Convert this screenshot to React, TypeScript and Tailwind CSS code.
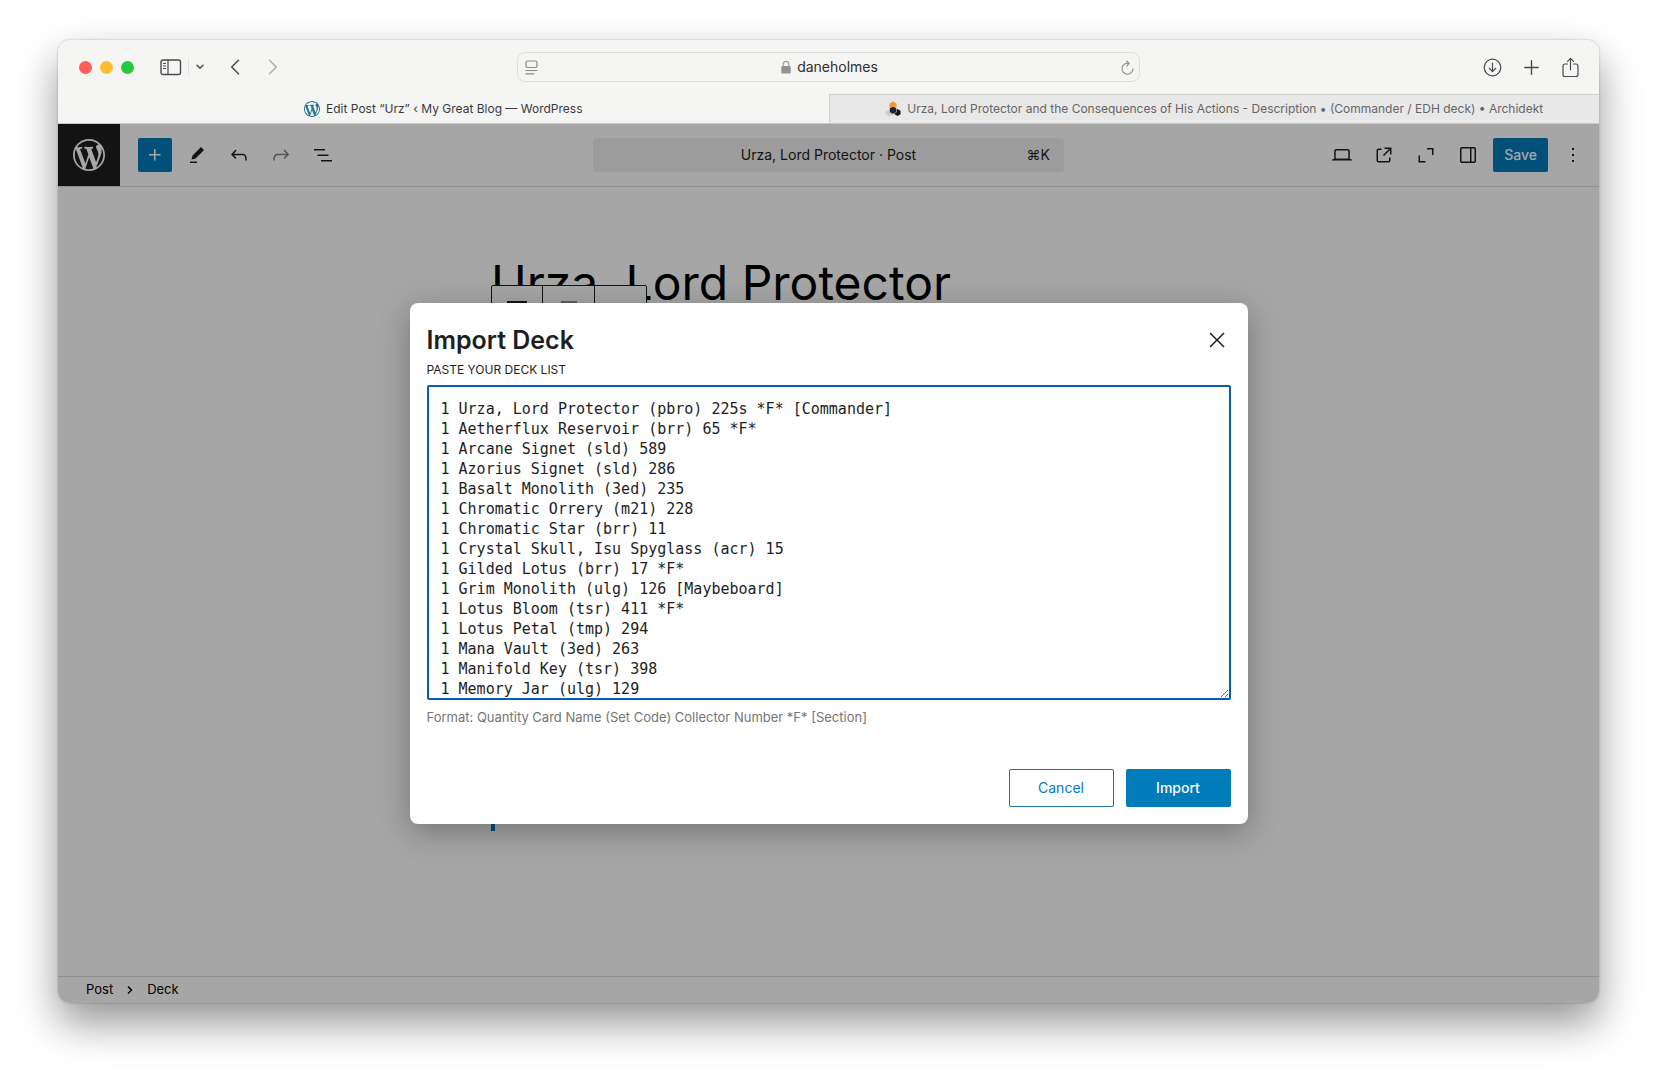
import type { ReactNode } from "react";

const deckList = `1 Urza, Lord Protector (pbro) 225s *F* [Commander]
1 Aetherflux Reservoir (brr) 65 *F*
1 Arcane Signet (sld) 589
1 Azorius Signet (sld) 286
1 Basalt Monolith (3ed) 235
1 Chromatic Orrery (m21) 228
1 Chromatic Star (brr) 11
1 Crystal Skull, Isu Spyglass (acr) 15
1 Gilded Lotus (brr) 17 *F*
1 Grim Monolith (ulg) 126 [Maybeboard]
1 Lotus Bloom (tsr) 411 *F*
1 Lotus Petal (tmp) 294
1 Mana Vault (3ed) 263
1 Manifold Key (tsr) 398
1 Memory Jar (ulg) 129`;

const icons = {
  plus: "M11 12.5V17.5H12.5V12.5H17.5V11H12.5V6H11V11H6V12.5H11Z",
  edit: "m19 7-3-3-8.5 8.5-1 4 4-1L19 7Zm-7 11.5H5V20h7v-1.5Z",
  undo: "M18.3 11.7c-.6-.6-1.4-.9-2.3-.9H6.7l2.9-3.3-1.1-1-4.5 5L8.5 16l1-1-2.7-2.7H16c.5 0 .9.2 1.3.5 1 1 1 3.4 1 4.5v.3h1.5v-.2c0-1.5 0-4.3-1.5-5.7z",
  redo: "M15.6 6.5l-1.1 1 2.9 3.3H8c-.9 0-1.7.3-2.3.9-1.4 1.5-1.4 4.2-1.4 5.6v.2h1.5v-.3c0-1.1 0-3.5 1-4.5.3-.3.7-.5 1.3-.5h9.2L14.5 15l1.1 1.1 4.6-4.6-4.6-5z",
  list: "M3 6h11v1.5H3V6Zm3.5 5.5h11V13h-11v-1.5ZM21 17H10v1.5h11V17Z",
  desktop:
    "M20.5 16h-.7V8c0-1.1-.9-2-2-2H6.2c-1.1 0-2 .9-2 2v8h-.7c-.8 0-1.5.7-1.5 1.5h20c0-.8-.7-1.5-1.5-1.5zM5.7 8c0-.3.2-.5.5-.5h11.6c.3 0 .5.2.5.5v7.6H5.7V8z",
  external:
    "M19.5 4.5h-7V6h4.44l-5.97 5.97 1.06 1.06L18 7.06v4.44h1.5v-7Zm-13 1a2 2 0 0 0-2 2v10a2 2 0 0 0 2 2h10a2 2 0 0 0 2-2v-3H17v3a.5.5 0 0 1-.5.5h-10a.5.5 0 0 1-.5-.5v-10a.5.5 0 0 1 .5-.5h3V5.5h-3Z",
  expand: "M13 5h6.5v7H18V6.5h-5V5ZM4.5 12.5H6V18h5.5v1.5h-7v-7Z",
  drawer:
    "M18 4H6c-1.1 0-2 .9-2 2v12c0 1.1.9 2 2 2h12c1.1 0 2-.9 2-2V6c0-1.1-.9-2-2-2zm-4 14.5H6c-.3 0-.5-.2-.5-.5V6c0-.3.2-.5.5-.5h8v13zm4.5-.5c0 .3-.2.5-.5.5h-2.5v-13H18c.3 0 .5.2.5.5v12z",
  more: "M13 19h-2v-2h2v2zm0-6h-2v-2h2v2zm0-6h-2V5h2v2z",
  close:
    "m13.06 12 6.47-6.47-1.06-1.06L12 10.94 5.53 4.47 4.47 5.53 10.94 12l-6.47 6.47 1.06 1.06L12 13.06l6.47 6.47 1.06-1.06L13.06 12Z",
};

function Icon({ name, className = "size-6" }: { name: keyof typeof icons; className?: string }) {
  return (
    <svg viewBox="0 0 24 24" fill="currentColor" className={className} aria-hidden="true">
      <path d={icons[name]} />
    </svg>
  );
}

function WordPressLogo({ className }: { className: string }) {
  return (
    <svg viewBox="0 0 20 20" fill="currentColor" className={className} aria-hidden="true">
      <path d="M20 10c0-5.51-4.49-10-10-10C4.48 0 0 4.49 0 10c0 5.52 4.48 10 10 10 5.51 0 10-4.48 10-10zM7.78 15.37L4.37 6.22c.55-.02 1.17-.08 1.17-.08.5-.06.44-1.13-.06-1.11 0 0-1.45.11-2.37.11-.18 0-.37 0-.58-.01C4.12 2.69 6.87 1.11 10 1.11c2.33 0 4.45.87 6.05 2.34-.68-.11-1.65.39-1.65 1.58 0 .74.45 1.36.9 2.1.35.61.55 1.36.55 2.46 0 1.49-1.4 5-1.4 5l-3.03-8.37c.54-.02.82-.17.82-.17.5-.05.44-1.25-.06-1.22 0 0-1.44.12-2.38.12-.87 0-2.33-.12-2.33-.12-.5-.03-.56 1.2-.06 1.22l.92.08 1.26 3.41zM17.41 10c.24-.64.74-1.87.43-4.25.7 1.29 1.05 2.71 1.05 4.25 0 3.29-1.73 6.24-4.4 7.78.97-2.59 1.94-5.2 2.92-7.78zM6.1 18.09C3.12 16.65 1.11 13.53 1.11 10c0-1.3.23-2.48.72-3.59C3.25 10.3 4.67 14.2 6.1 18.09zm4.03-6.63l2.58 6.98c-.86.29-1.76.45-2.71.45-.79 0-1.57-.11-2.29-.33.81-2.38 1.62-4.74 2.42-7.1z" />
    </svg>
  );
}

function Line({ box, className, children }: { box: string; className: string; children: ReactNode }) {
  return (
    <svg
      viewBox={box}
      fill="none"
      stroke="currentColor"
      strokeLinecap="round"
      strokeLinejoin="round"
      className={className}
      aria-hidden="true"
    >
      {children}
    </svg>
  );
}

function ToolButton({ label, children, className = "" }: { label: string; children: ReactNode; className?: string }) {
  return (
    <button type="button" aria-label={label} className={`flex size-[34px] items-center justify-center ${className}`}>
      {children}
    </button>
  );
}

function BrowserToolbar() {
  return (
    <div className="grid h-[54px] grid-cols-[1fr_minmax(0,623px)_1fr] items-center bg-[#f5f5f4] text-[#4a4a4a]">
      <div className="flex items-center pl-[21px]">
        <div className="flex gap-2">
          <span className="size-[13px] rounded-full bg-[#ff5f57]" />
          <span className="size-[13px] rounded-full bg-[#febc2e]" />
          <span className="size-[13px] rounded-full bg-[#28c840]" />
        </div>
        <button type="button" aria-label="Toggle sidebar" className="ml-[26px]">
          <Line box="0 0 22 17" className="h-[17px] w-[22px]">
            <rect x="1" y="1" width="19.5" height="14.5" rx="2" strokeWidth="1.4" />
            <path d="M8 1v14.5" strokeWidth="1.2" />
            <path d="M3.5 4.5h2.2M3.5 7h2.2M3.5 9.5h2.2" strokeWidth="1" />
          </Line>
        </button>
        <span className="ml-1.5 h-[18px] w-px bg-[#e3e3e3]" />
        <button type="button" aria-label="Tab groups" className="ml-[7px]">
          <Line box="0 0 8 6" className="h-1.5 w-2">
            <path d="M1 1.3l3 3 3-3" strokeWidth="1.4" />
          </Line>
        </button>
        <button type="button" aria-label="Back" className="ml-[26px]">
          <Line box="0 0 10 16" className="h-4 w-2.5">
            <path d="M8.5 1.2L1.7 8l6.8 6.8" strokeWidth="1.5" />
          </Line>
        </button>
        <button type="button" aria-label="Forward" className="ml-7 text-[#b0b0af]">
          <Line box="0 0 10 16" className="h-4 w-2.5">
            <path d="M1.5 1.2L8.3 8l-6.8 6.8" strokeWidth="1.5" />
          </Line>
        </button>
      </div>

      <div className="flex h-[30px] items-center rounded-lg border border-[#dededd] pr-[5px] pl-[7px] text-[#8a8a8a]">
        <button type="button" aria-label="Page menu">
          <Line box="0 0 13 15" className="h-[15px] w-[13px]">
            <rect x="1" y="1" width="11" height="6.5" rx="1.5" strokeWidth="1.2" />
            <path d="M1 10.5h11M1 13.8h8" strokeWidth="1.2" />
          </Line>
        </button>
        <div className="flex flex-1 items-center justify-center gap-1.5">
          <svg viewBox="0 0 10 14" className="h-3.5 w-2.5" aria-hidden="true">
            <path d="M2.3 7V4a2.7 2.7 0 0 1 5.4 0v3" fill="none" stroke="#a2a2a2" strokeWidth="1.2" />
            <rect x=".3" y="6" width="9.4" height="7.5" rx="1.3" fill="#929292" />
          </svg>
          <span className="text-sm text-[#2f2f2f]">daneholmes</span>
        </div>
        <button type="button" aria-label="Reload">
          <Line box="0 0 13 15" className="h-[15px] w-[13px]">
            <path d="M12 8.7A5.5 5.5 0 1 1 7.6 3.3M5.6 1l2.5 2.3L5.9 5.8" strokeWidth="1.1" />
          </Line>
        </button>
      </div>

      <div className="flex items-center justify-end gap-5 pr-[19px]">
        <button type="button" aria-label="Downloads">
          <Line box="0 0 19 19" className="size-[19px]">
            <circle cx="9.5" cy="9.5" r="8.3" strokeWidth="1.2" />
            <path d="M9.5 5v8.3M6.2 10.2l3.3 3.3 3.3-3.3" strokeWidth="1.2" />
          </Line>
        </button>
        <button type="button" aria-label="New tab">
          <Line box="0 0 19 19" className="size-[19px]">
            <path d="M9.5 2.8v13.4M2.8 9.5h13.4" strokeWidth="1.4" />
          </Line>
        </button>
        <button type="button" aria-label="Share">
          <Line box="0 0 19 21" className="h-[21px] w-[19px]">
            <path
              d="M6.5 7H4a2 2 0 0 0-2 2v8.500a2 2 0 0 0 2 2h11a2 2 0 0 0 2-2V9a2 2 0 0 0-2-2h-2.500M9.500 13V1.500M6.500 4.300l3-3 3 3"
              strokeWidth="1.2"
            />
          </Line>
        </button>
      </div>
    </div>
  );
}

function BrowserTabs() {
  return (
    <div className="grid h-[30px] grid-cols-2 border-b border-[#c8c8c8] text-xs" role="tablist">
      <button
        type="button"
        role="tab"
        aria-selected="true"
        className="flex min-w-0 items-center justify-center gap-1.5 bg-[#f5f5f4] pt-px text-[#3a3a3a]"
      >
        <WordPressLogo className="size-4 shrink-0 text-[#21759b]" />
        <span className="truncate">Edit Post “Urz” ‹ My Great Blog — WordPress</span>
      </button>
      <button
        type="button"
        role="tab"
        aria-selected="false"
        className="flex min-w-0 items-center justify-center gap-1.5 border-t border-l border-[#d0d0d0] bg-[#e8e8e8] text-[#666666]"
      >
        <svg viewBox="0 0 16 16" className="size-4 shrink-0" aria-hidden="true">
          <path d="M4.500 2.500L8 .5l3.500 2v4l-3.500 2-3.500-2z" fill="#f59a1c" />
          <path d="M.5 10.500l3-1.800 3.500 2v3l-3 1.800-3.500-2z" fill="#cfcfcf" />
          <path d="M9.500 9.500l3-1.500 3 1.700v3.600l-3 1.700-3-1.700z" fill="#111111" />
          <path d="M4.500 7.200L8 5.200l3.500 2v4L8 13.200l-3.500-2z" fill="#262626" stroke="#e8e8e8" strokeWidth=".5" />
        </svg>
        <span className="truncate">
          Urza, Lord Protector and the Consequences of His Actions - Description • (Commander / EDH deck) • Archidekt
        </span>
      </button>
    </div>
  );
}

function EditorHeader() {
  return (
    <header className="grid h-[63px] shrink-0 grid-cols-[1fr_minmax(0,471px)_1fr] items-center border-b border-[#dddddd] bg-white text-[#1e1e1e]">
      <div className="flex items-center gap-2">
        <a
          href="#"
          aria-label="View posts"
          className="mr-2.5 flex size-[62px] items-center justify-center bg-[#1e1e1e] text-white"
        >
          <WordPressLogo className="size-8" />
        </a>
        <ToolButton label="Add block" className="rounded-xs bg-[#007cba] text-white">
          <Icon name="plus" />
        </ToolButton>
        <ToolButton label="Tools">
          <Icon name="edit" />
        </ToolButton>
        <ToolButton label="Undo">
          <Icon name="undo" />
        </ToolButton>
        <ToolButton label="Redo" className="text-[#808080]">
          <Icon name="redo" />
        </ToolButton>
        <ToolButton label="Document overview">
          <Icon name="list" />
        </ToolButton>
      </div>

      <button type="button" className="grid h-[34px] grid-cols-[1fr_auto_1fr] items-center rounded bg-[#f0f0f0] px-3.5 text-sm">
        <span />
        <span>Urza, Lord Protector · Post</span>
        <span className="text-right">⌘K</span>
      </button>

      <div className="flex items-center justify-end gap-2 pr-[9px]">
        <ToolButton label="View">
          <Icon name="desktop" />
        </ToolButton>
        <ToolButton label="View post">
          <Icon name="external" />
        </ToolButton>
        <ToolButton label="Expand">
          <Icon name="expand" />
        </ToolButton>
        <ToolButton label="Settings">
          <Icon name="drawer" />
        </ToolButton>
        <button type="button" className="h-[34px] rounded-xs bg-[#007cba] px-[11px] text-sm font-medium text-white">
          Save
        </button>
        <ToolButton label="Options">
          <Icon name="more" />
        </ToolButton>
      </div>
    </header>
  );
}

function EditorCanvas() {
  return (
    <main className="min-h-0 flex-1 overflow-hidden bg-white pt-16 text-black">
      <div className="relative mx-auto max-w-[675px]">
        <h1 className="text-[48px] leading-[64px] font-normal">Urza, Lord Protector</h1>
        <div className="absolute top-[34px] left-0 flex h-12 rounded-xs border border-[#1e1e1e] bg-white">
          <div className="flex w-[51px] justify-center border-r border-[#1e1e1e] pt-[15px]">
            <span className="h-4 w-5 border-t-4 border-[#1e1e1e]" />
          </div>
          <div className="flex w-[52px] justify-center border-r border-[#1e1e1e] pt-[15px]">
            <span className="h-4 w-4 border-t-4 border-[#949494]" />
          </div>
          <div className="w-[51px]" />
        </div>
        <div className="mt-12 h-[468px] w-1 bg-[#007cba]" />
      </div>
    </main>
  );
}

function Breadcrumb() {
  return (
    <nav
      aria-label="Block breadcrumb"
      className="flex h-[27px] shrink-0 items-center border-t border-[#dddddd] bg-white pl-7 text-[13px] text-black"
    >
      <a href="#">Post</a>
      <svg viewBox="0 0 6 8" className="mx-3.5 h-2 w-1.5" fill="none" stroke="currentColor" strokeWidth="1.5" aria-hidden="true">
        <path d="M1 .5L4.5 4 1 7.5" />
      </svg>
      <span>Deck</span>
    </nav>
  );
}

function ImportDialog() {
  return (
    <div className="absolute inset-0 flex items-center justify-center bg-black/35">
      <section
        role="dialog"
        aria-modal="true"
        aria-labelledby="import-title"
        className="w-full max-w-[838px] rounded-lg bg-white px-[17px] pb-[17px] shadow-[0_8px_32px_rgba(0,0,0,0.3)]"
      >
        <div className="flex h-[59px] items-end justify-between">
          <h2 id="import-title" className="text-[25px] leading-11 font-semibold text-[#1e1e1e]">
            Import Deck
          </h2>
          <button type="button" aria-label="Close" className="mb-2 flex size-7 items-center justify-center text-[#1e1e1e]">
            <Icon name="close" />
          </button>
        </div>
        <label htmlFor="deck-list" className="block text-xs leading-4 text-[#1e1e1e] uppercase">
          Paste your deck list
        </label>
        <textarea
          id="deck-list"
          defaultValue={deckList}
          spellCheck={false}
          className="mt-[7px] block h-[315px] w-full resize overflow-hidden rounded-xs border-2 border-[#0a5cb0] px-3 pt-3 font-['DejaVu_Sans_Mono',monospace] text-[15px] leading-5 text-[#1e1e1e] outline-none"
        />
        <p className="mt-[7px] text-[13px] leading-5 text-[#757575]">
          Format: Quantity Card Name (Set Code) Collector Number *F* [Section]
        </p>
        <div className="mt-[42px] flex justify-end gap-3 text-sm">
          <button type="button" className="h-[38px] w-[105px] rounded-xs border border-[#2271b1] text-[#007cba]">
            Cancel
          </button>
          <button type="button" className="h-[38px] w-[105px] rounded-xs bg-[#007cba] font-medium text-white">
            Import
          </button>
        </div>
      </section>
    </div>
  );
}

export default function App() {
  return (
    <div className="flex h-screen flex-col bg-white px-[58px] pt-10 pb-[77px] font-['Inter',sans-serif]">
      <div className="flex min-h-0 flex-1 flex-col overflow-hidden rounded-xl shadow-[0_0_2px_rgba(0,0,0,0.3),0_20px_42px_rgba(0,0,0,0.42)]">
        <BrowserToolbar />
        <BrowserTabs />
        <div className="relative flex min-h-0 flex-1 flex-col">
          <EditorHeader />
          <EditorCanvas />
          <Breadcrumb />
          <ImportDialog />
        </div>
      </div>
    </div>
  );
}
